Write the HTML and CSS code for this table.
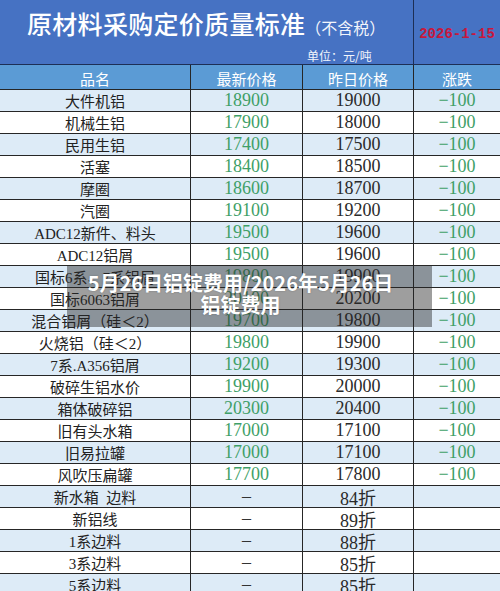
FILE: index.html
```html
<!DOCTYPE html>
<html lang="zh-CN">
<head>
<meta charset="utf-8">
<title>原材料采购定价质量标准</title>
<link rel="stylesheet" href="styles.css">
</head>
<body>
<div class="sheet">
  <div class="title-row">
    <div class="title-cell">
      <div class="title-line"><span class="title">原材料采购定价质量标准</span><span class="note">（不含税）</span></div>
      <div class="unit">单位：元/吨</div>
    </div>
    <div class="date-cell">2026-1-15</div>
  </div>

  <div class="row head">
    <div class="c">品名</div><div class="c">最新价格</div><div class="c">昨日价格</div><div class="c">涨跌</div>
  </div>

  <div class="row alt"><div class="c name">大件机铝</div><div class="c num new">18900</div><div class="c num">19000</div><div class="c num chg">−100</div></div>
  <div class="row"><div class="c name">机械生铝</div><div class="c num new">17900</div><div class="c num">18000</div><div class="c num chg">−100</div></div>
  <div class="row alt"><div class="c name">民用生铝</div><div class="c num new">17400</div><div class="c num">17500</div><div class="c num chg">−100</div></div>
  <div class="row"><div class="c name">活塞</div><div class="c num new">18400</div><div class="c num">18500</div><div class="c num chg">−100</div></div>
  <div class="row alt"><div class="c name">摩圈</div><div class="c num new">18600</div><div class="c num">18700</div><div class="c num chg">−100</div></div>
  <div class="row"><div class="c name">汽圈</div><div class="c num new">19100</div><div class="c num">19200</div><div class="c num chg">−100</div></div>
  <div class="row alt"><div class="c name">ADC12新件、料头</div><div class="c num new">19500</div><div class="c num">19600</div><div class="c num chg">−100</div></div>
  <div class="row"><div class="c name">ADC12铝屑</div><div class="c num new">19500</div><div class="c num">19600</div><div class="c num chg">−100</div></div>
  <div class="row alt"><div class="c name">国标6系、7系铝屑</div><div class="c num new">19800</div><div class="c num">19900</div><div class="c num chg">−100</div></div>
  <div class="row"><div class="c name">国标6063铝屑</div><div class="c num new">20100</div><div class="c num">20200</div><div class="c num chg">−100</div></div>
  <div class="row alt"><div class="c name">混合铝屑（硅＜2）</div><div class="c num new">19700</div><div class="c num">19800</div><div class="c num chg">−100</div></div>
  <div class="row"><div class="c name">火烧铝（硅＜2）</div><div class="c num new">19800</div><div class="c num">19900</div><div class="c num chg">−100</div></div>
  <div class="row alt"><div class="c name">7系.A356铝屑</div><div class="c num new">19200</div><div class="c num">19300</div><div class="c num chg">−100</div></div>
  <div class="row"><div class="c name">破碎生铝水价</div><div class="c num new">19900</div><div class="c num">20000</div><div class="c num chg">−100</div></div>
  <div class="row alt"><div class="c name">箱体破碎铝</div><div class="c num new">20300</div><div class="c num">20400</div><div class="c num chg">−100</div></div>
  <div class="row"><div class="c name">旧有头水箱</div><div class="c num new">17000</div><div class="c num">17100</div><div class="c num chg">−100</div></div>
  <div class="row alt"><div class="c name">旧易拉罐</div><div class="c num new">17000</div><div class="c num">17100</div><div class="c num chg">−100</div></div>
  <div class="row"><div class="c name">风吹压扁罐</div><div class="c num new">17700</div><div class="c num">17800</div><div class="c num chg">−100</div></div>
  <div class="row alt"><div class="c name">新水箱&nbsp;&nbsp;边料</div><div class="c num dash">–</div><div class="c num">84折</div><div class="c num"></div></div>
  <div class="row"><div class="c name">新铝线</div><div class="c num dash">–</div><div class="c num">89折</div><div class="c num"></div></div>
  <div class="row alt"><div class="c name">1系边料</div><div class="c num dash">–</div><div class="c num">88折</div><div class="c num"></div></div>
  <div class="row"><div class="c name">3系边料</div><div class="c num dash">–</div><div class="c num">85折</div><div class="c num"></div></div>
  <div class="row alt"><div class="c name">5系边料</div><div class="c num dash">–</div><div class="c num">85折</div><div class="c num"></div></div>

  <div class="overlay">5月26日铝锭费用/2026年5月26日<br>铝锭费用</div>
</div>
</body>
</html>
```

FILE: styles.css
```css
html, body {
  margin: 0;
  padding: 0;
  background: #ffffff;
}

body {
  width: 500px;
  height: 591px;
  overflow: hidden;
  font-family: "Noto Sans CJK SC", sans-serif;
}

.sheet {
  position: relative;
  width: 500px;
}

.title-row {
  display: grid;
  grid-template-columns: 414px 86px;
  height: 65px;
  background: #4672c3;
  border-bottom: 1px solid #1d2f55;
  box-sizing: border-box;
}

.title-cell {
  border-right: 1px solid #1d2f55;
  padding: 8px 0 0 27px;
  color: #ffffff;
}

.title-line {
  line-height: 30px;
  white-space: nowrap;
}

.title {
  font-size: 25px;
  font-weight: 500;
  letter-spacing: 0.3px;
}

.note {
  font-size: 16px;
  color: #f2f5fb;
}

.unit {
  margin-top: 6px;
  padding-left: 280px;
  font-size: 12px;
  line-height: 16px;
  color: #f2f5fb;
}

.date-cell {
  display: flex;
  align-items: center;
  justify-content: center;
  padding-top: 4px;
  font-family: "Liberation Mono", monospace;
  font-weight: 700;
  font-size: 14px;
  color: #c8173c;
}

.row {
  display: grid;
  grid-template-columns: 191px 112px 111px 86px;
  height: 22px;
  box-sizing: border-box;
  border-bottom: 1px solid #262626;
  background: #ffffff;
}

.row.alt {
  background: #ddebf7;
}

.row.head {
  height: 25px;
  background: #5b9bd5;
  color: #ffffff;
  font-size: 15px;
}

.row.head .c {
  padding-top: 2px;
  box-sizing: border-box;
}

.c {
  display: flex;
  align-items: center;
  justify-content: center;
  border-right: 1px solid #262626;
  white-space: nowrap;
  overflow: hidden;
}

.c:last-child {
  border-right: none;
}

.name {
  font-family: "Liberation Serif", "Noto Sans CJK SC", serif;
  font-size: 15px;
  color: #222222;
}

.num {
  font-family: "Liberation Serif", "Noto Sans CJK SC", serif;
  font-size: 18px;
  color: #2a2a2a;
}

.new, .chg {
  color: #3f9f68;
}

.dash {
  color: #333333;
}

.overlay {
  position: absolute;
  left: 67px;
  top: 265px;
  width: 365px;
  height: 62px;
  box-sizing: border-box;
  padding: 7px 18px 0 0;
  background: rgba(40, 40, 40, 0.45);
  color: #ffffff;
  font-family: "Noto Sans CJK SC", sans-serif;
  font-weight: 700;
  font-size: 20px;
  line-height: 22px;
  text-align: center;
  text-shadow: 0 0 2px rgba(0, 0, 0, 0.25);
}
```
